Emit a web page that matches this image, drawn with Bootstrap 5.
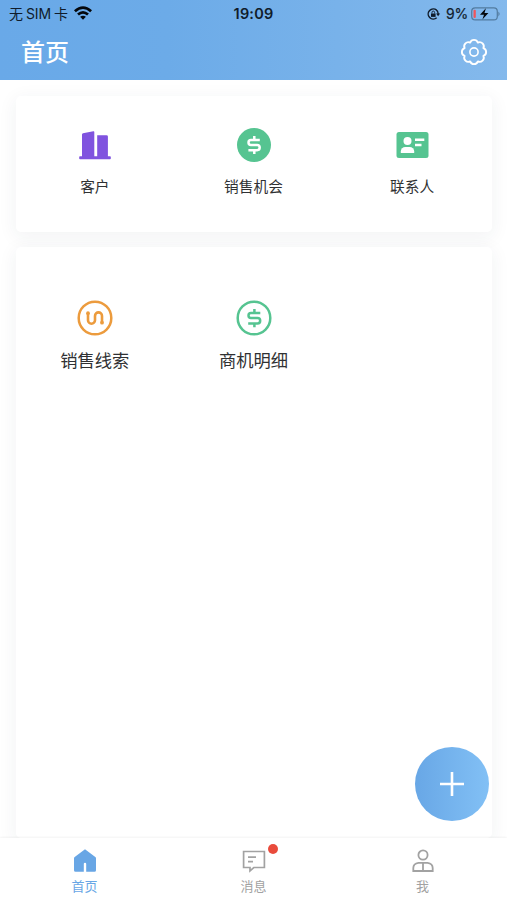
<!DOCTYPE html>
<html lang="zh-CN">
<head>
<meta charset="utf-8">
<meta name="viewport" content="width=device-width, initial-scale=1">
<title>首页</title>
<link href="https://cdn.jsdelivr.net/npm/bootstrap@5.3.0/dist/css/bootstrap.min.css" rel="stylesheet">
<style>
  body { font-family: Inter, "Noto Sans CJK SC", sans-serif; color: #303133; background: #fff; line-height: 1; }
  svg { display: block; overflow: visible; }
  .app-head { height: 80px; background: linear-gradient(90deg, #69a9e8 0%, #6cabe8 33%, #84b9ec 100%); position: relative; z-index: 1; }
  .status-bar { height: 28px; padding: 0 6px 0 9px; font-size: 14px; color: #101c2b; }
  .status-bar > div { flex: 1 1 0; }
  .carrier { letter-spacing: -.1px; }
  .carrier svg { margin-left: 6px; margin-top: -2px; }
  .sim { margin: 0 3px; }
  .clock { font-weight: 600; font-size: 14.5px; padding-right: 3px; letter-spacing: .2px; }
  .pct { margin: 0 3px 0 6px; letter-spacing: -.2px; -webkit-text-stroke: .2px; }
  .title-bar { height: 49px; padding: 0 20px 0 21px; }
  .title-bar h1 { font-size: 24px; font-weight: 500; line-height: 1; }
  .title-bar svg { margin-top: -2px; }
  .panel { margin: 0 15px 0 16px; border-radius: 5px; background: #fff; box-shadow: 0 4px 18px 2px rgba(40,50,80,.055); }
  .panel-top { height: 136px; padding-top: 32px; }
  .panel-main { margin-top: 15px; padding-top: 53px; }
  .tile-s { font-size: 14.7px; gap: 18px; }
  .tile-l { font-size: 17.3px; gap: 16px; }
  .tile-s span, .tile-l span { margin-left: -1px; }
  .tab-bar { height: 62px; font-size: 13px; color: #a2a2a2; background: #fff; box-shadow: 0 -1px 2px rgba(0,0,0,.05); padding-top: 10px; z-index: 2; }
  .tab-bar a { color: inherit; gap: 6px; }
  .tab-bar a.on { color: #68a6e5; }
  .dot { width: 10px; height: 10px; background: #e94b3c; top: -4px; left: 26px; }
  .fab { width: 74px; height: 74px; right: 18px; bottom: 79px; background: linear-gradient(90deg, #68a7e6, #82c0f5); }
</style>
<script src="https://cdn.jsdelivr.net/npm/bootstrap@5.3.0/dist/js/bootstrap.bundle.min.js" defer></script>
</head>
<body>
<div class="d-flex flex-column vh-100 overflow-hidden position-relative">
  <header class="app-head flex-shrink-0">
    <div class="status-bar d-flex align-items-center">
      <div class="carrier d-flex align-items-center">
        <span>无</span><span class="sim">SIM</span><span>卡</span>
        <svg width="18" height="14" viewBox="0 0 18 14" fill="none" stroke="#05080c" stroke-width="2.7">
          <path d="M.9 5.3Q9-2 17.1 5.3M4 8.5q5-4.4 10 0"/><path d="M9 13.7 6.1 10.8q2.9-2.3 5.8 0z" fill="#05080c" stroke="none"/>
        </svg>
      </div>
      <div class="clock text-center">19:09</div>
      <div class="d-flex align-items-center justify-content-end">
        <svg width="13" height="12" viewBox="0 0 13 12" fill="none" stroke="#101c2b" stroke-width="1.5">
          <path d="M9.7 2.2A5.1 5.1 0 1 0 9.7 9.8M9.3 1.8A5.1 5.1 0 0 1 11.2 6"/><path d="m9.1 5.5 4 0-2 2.8z" fill="#101c2b" stroke="none"/>
          <path d="M4 5.5h4.600v3.400H4z" fill="#101c2b" stroke="none"/><path d="M5 5.500V4.400a1.300 1.300 0 0 1 2.600 0v1.100" stroke-width=".9"/>
        </svg>
        <span class="pct">9%</span>
        <svg width="30" height="14" viewBox="0 0 30 14">
          <rect x=".7" y=".9" width="25.600" height="12" rx="3.500" fill="none" stroke="#527b9f" stroke-width="1.200"/>
          <path d="M27.400 4.600q2.400 2.400 0 4.800z" fill="#527b9f"/><rect x="2.500" y="2.800" width="2.300" height="8.200" rx="1" fill="#f1555a"/>
          <path d="M14.900 1.300 9 7.700h4l-1.600 4.800 6-6.400h-3.900z" fill="#05080c"/>
        </svg>
      </div>
    </div>
    <div class="title-bar d-flex align-items-center justify-content-between text-white">
      <h1 class="m-0">首页</h1>
      <svg width="26" height="26" viewBox="-13 -13 26 26" fill="none" stroke="#fff" stroke-width="1.900" stroke-linejoin="round">
        <path d="M-3.900-9.400A4.150 4.150 0 0 1 3.900-9.400 4.150 4.150 0 0 1 9.400-3.900 4.150 4.150 0 0 1 9.400 3.900 4.150 4.150 0 0 1 3.900 9.400 4.150 4.150 0 0 1-3.900 9.400 4.150 4.150 0 0 1-9.400 3.900 4.150 4.150 0 0 1-9.400-3.900 4.150 4.150 0 0 1-3.900-9.400z"/>
        <circle r="4.100" stroke-width="1.600"/>
      </svg>
    </div>
  </header>

  <main class="flex-grow-1 d-flex flex-column pt-3">
    <section class="panel panel-top flex-shrink-0">
      <div class="row g-0">
        <div class="col-4 tile-s d-flex flex-column align-items-center">
          <svg width="34" height="34" viewBox="0 0 34 34" fill="#8053df">
            <path d="M4 6.500q0-1 1-1.300L15.300 3.200q1-.2 1 .8v25H4zM19.200 7.200H28.500q1.400 0 1.400 1.400v20H19.200zM2 28.300h30q.8 0 .8.800v1.500q0 .6-.8.600H2q-.8 0-.8-.6v-1.500q0-.8.8-.8z"/>
          </svg>
          <span>客户</span>
        </div>
        <div class="col-4 tile-s d-flex flex-column align-items-center">
          <svg width="34" height="34" viewBox="0 0 34 34" fill="none" stroke="#fff" stroke-width="2.500">
            <circle cx="17" cy="17" r="17" fill="#56c491" stroke="none"/>
            <path d="M22.800 12H14a2.500 2.500 0 0 0 0 5h6.100a2.600 2.600 0 0 1 0 5.200h-8.700M17.300 8v4M17.300 22v4"/>
          </svg>
          <span>销售机会</span>
        </div>
        <div class="col-4 tile-s d-flex flex-column align-items-center">
          <svg width="34" height="34" viewBox="0 0 34 34" fill="#fff">
            <rect x=".5" y="4" width="32" height="26" rx="2.500" fill="#56c491"/>
            <circle cx="11.500" cy="13" r="4"/><path d="M4.800 25v-1.500a4.500 4.500 0 0 1 4.500-4.500h4.400a4.500 4.500 0 0 1 4.500 4.500V25z"/>
            <path d="M19 10.400h9.300v2.500H19zM19 15.800h6.500v2.500H19z"/>
          </svg>
          <span>联系人</span>
        </div>
      </div>
    </section>

    <section class="panel panel-main flex-grow-1">
      <div class="row g-0">
        <div class="col-4 tile-l d-flex flex-column align-items-center">
          <svg width="36" height="36" viewBox="0 0 36 36" fill="none" stroke="#ec9b3d" stroke-width="2.500">
            <circle cx="18" cy="18" r="16.300"/>
            <path d="M11 13.500v6.700a3.500 3.500 0 0 0 7 0v-4.300a3.500 3.500 0 0 1 7 0v6.600" stroke-width="2.600"/>
            <g fill="#ec9b3d" stroke="none"><circle cx="11" cy="13.200" r="1.900"/><circle cx="25" cy="22.700" r="1.900"/></g>
          </svg>
          <span>销售线索</span>
        </div>
        <div class="col-4 tile-l d-flex flex-column align-items-center">
          <svg width="36" height="36" viewBox="0 0 36 36" fill="none" stroke="#56c491" stroke-width="2.500">
            <circle cx="18" cy="18" r="16.300"/>
            <path d="M24.300 13H15a2.500 2.500 0 0 0 0 5h6.500a2.700 2.700 0 0 1 0 5.400h-9.300M18.400 9v4M18.400 23.200v4"/>
          </svg>
          <span>商机明细</span>
        </div>
      </div>
    </section>
  </main>

  <button class="fab btn border-0 rounded-circle position-absolute p-0 d-flex align-items-center justify-content-center" aria-label="新建">
    <svg width="24" height="24" viewBox="0 0 24 24" fill="none" stroke="#fff" stroke-width="2.600"><path d="M0 12h24M12 0v24"/></svg>
  </button>

  <nav class="tab-bar row g-0 flex-shrink-0 position-relative">
    <a href="#" class="on col-4 d-flex flex-column align-items-center text-decoration-none">
      <svg width="24" height="26" viewBox="0 0 24 26" fill="currentColor"><path d="M12 1.300 22.300 9q.7.500.7 1.400v11.800q0 1.600-1.600 1.600h-8.200v-8q0-1.100-1.200-1.100t-1.200 1.100v8H2.600Q1 23.800 1 22.200V10.400Q1 9.500 1.700 9z"/></svg>
      <span>首页</span>
    </a>
    <a href="#" class="col-4 d-flex flex-column align-items-center text-decoration-none">
      <span class="position-relative">
        <svg width="24" height="26" viewBox="0 0 24 26" fill="none" stroke="currentColor" stroke-width="1.700">
          <path d="M1.600 3.500h20.800v16H11.800L8 22.800v-3.300H1.600z"/><path d="M6 9.200h8M6 13.700h5"/>
        </svg>
        <i class="dot position-absolute rounded-circle"></i>
      </span>
      <span>消息</span>
    </a>
    <a href="#" class="col-4 d-flex flex-column align-items-center text-decoration-none">
      <svg width="24" height="26" viewBox="0 0 24 26" fill="none" stroke="currentColor" stroke-width="1.800">
        <circle cx="12" cy="7" r="4.600"/><path d="M7.500 14.800h9Q21.700 15.500 21.700 20v3H2.300v-3q0-4.500 5.200-5.200zM12 15v8"/>
      </svg>
      <span>我</span>
    </a>
  </nav>
</div>
</body>
</html>
